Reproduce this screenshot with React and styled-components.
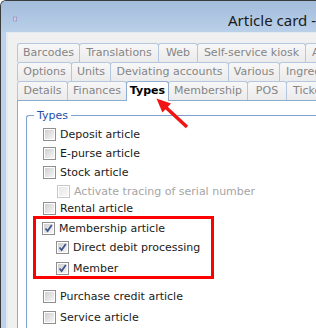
import React from 'react';
import styled, { createGlobalStyle } from 'styled-components';

const GlobalStyle = createGlobalStyle`
  html, body {
    margin: 0;
    padding: 0;
    background: #ffffff;
  }
  body {
    font-family: "DejaVu Sans", Verdana, sans-serif;
    font-size: 11px;
  }
`;

const Window = styled.div`
  position: relative;
  width: 316px;
  height: 328px;
  overflow: hidden;
  box-sizing: border-box;
  display: flex;
  flex-direction: column;
  background: #bdd2ea;
  border-left: 1px solid #3b3b3b;
  border-top: 1px solid #3b3b3b;
  border-top-left-radius: 6px;
`;

const TitleBar = styled.div`
  height: 31px;
  flex-shrink: 0;
  display: flex;
  align-items: flex-start;
  padding: 11px 0 0 12px;
  box-sizing: border-box;
  background: linear-gradient(#a2bcdb, #bad0e9);
`;

const Title = styled.div`
  margin-left: 211px;
  margin-top: -2px;
  font-family: "Noto Sans", "Open Sans", sans-serif;
  font-size: 15px;
  color: #1a1a1a;
  white-space: nowrap;
`;

const Body = styled.div`
  flex: 1;
  display: flex;
  padding-left: 5px;
  min-height: 0;
`;

const Client = styled.div`
  flex: 1;
  display: flex;
  flex-direction: column;
  background: #f0f0f0;
  border-left: 2px solid #e2eaf4;
  border-top: 1px solid #e2eaf4;
  padding: 10px 0 0 9px;
  min-width: 0;
`;

const TabRow = styled.div`
  display: flex;
  height: 19px;
  flex-shrink: 0;
`;

const Tab = styled.div`
  position: relative;
  flex-shrink: 0;
  box-sizing: border-box;
  width: ${p => p.$w}px;
  height: ${p => (p.$active ? 20 : 19)}px;
  margin-left: ${p => (p.$first ? 0 : -1)}px;
  margin-bottom: ${p => (p.$active ? -1 : 0)}px;
  z-index: ${p => (p.$active ? 2 : 1)};
  border: 1px solid ${p => (p.$active ? '#8eabd0' : '#b4c7de')};
  border-bottom: none;
  border-radius: 3px 3px 0 0;
  background: ${p => (p.$active ? '#ffffff' : 'linear-gradient(#f7f7f7, #ebebeb)')};
  color: ${p => (p.$active ? '#000000' : '#858585')};
  font-weight: ${p => (p.$active ? 'bold' : 'normal')};
  line-height: 17px;
  text-align: ${p => (p.$cut ? 'left' : 'center')};
  padding-left: ${p => (p.$cut ? 6 : 0)}px;
  white-space: nowrap;
  overflow: hidden;
`;

const Panel = styled.div`
  flex: 1;
  background: #ffffff;
  border-top: 1px solid #8eabd0;
  border-left: 1px solid #8eabd0;
  padding: 14px 0 0 8px;
`;

const GroupBox = styled.div`
  position: relative;
  height: 300px;
  border: 1px solid #7f9fd0;
  border-right: none;
  border-radius: 3px 0 0 0;
  padding: 9px 0 0 16px;
`;

const Legend = styled.span`
  position: absolute;
  top: -7px;
  left: 7px;
  padding: 0 3px;
  background: #ffffff;
  color: #1f4fb0;
  line-height: 13px;
`;

const Row = styled.div`
  display: flex;
  align-items: center;
  gap: 4px;
  height: ${p => p.$h || 19}px;
  margin-top: ${p => p.$mt || 0}px;
  padding-left: ${p => (p.$indent ? 14 : 0)}px;
  color: ${p => (p.$disabled ? '#a5a5a5' : '#1a1a1a')};
  white-space: nowrap;
`;

const Highlight = styled.div`
  width: 181px;
  box-sizing: border-box;
  margin-left: -10px;
  border: 3px solid #ff0000;
  padding-left: 6px;
`;

const Box = styled.span`
  position: relative;
  flex-shrink: 0;
  width: 13px;
  height: 13px;
  box-sizing: border-box;
  border: 1px solid ${p => (p.$disabled ? '#c8c8c8' : '#8f8f8f')};
  background: #ffffff;

  &::before {
    content: '';
    position: absolute;
    inset: 1px;
    background: ${p =>
      p.$disabled
        ? 'linear-gradient(135deg, #e8e8e8, #f7f7f7)'
        : 'linear-gradient(135deg, #cfcfcf, #f6f6f6)'};
  }

  svg {
    position: absolute;
    left: 1px;
    top: 1px;
  }
`;

const Overlay = styled.svg`
  position: absolute;
  left: -1px;
  top: -1px;
  pointer-events: none;
  z-index: 5;
`;

function WinIcon() {
  return (
    <svg width="13" height="14" viewBox="0 0 13 14">
      <rect x="0.5" y="0.5" width="12" height="13" fill="#b9b3dd" stroke="#7670ae" />
      <path d="M3 3.5h7M3 5.5h5M3 7.5h7M3 9.5h4M3 11.5h6" stroke="#f4f2fb" strokeWidth="1" />
    </svg>
  );
}

function Checkbox({ checked, disabled }) {
  return (
    <Box $disabled={disabled}>
      {checked && (
        <svg width="9" height="9" viewBox="0 0 9 9">
          <path d="M1.5 4.5 L3.6 7 L7.8 1" fill="none" stroke="#42568e" strokeWidth="1.8" />
        </svg>
      )}
    </Box>
  );
}

function Option({ label, checked, disabled, indent, h, mt }) {
  return (
    <Row $indent={indent} $disabled={disabled} $h={h} $mt={mt}>
      <Checkbox checked={checked} disabled={disabled} />
      <span>{label}</span>
    </Row>
  );
}

const tabRows = [
  [
    ['Barcodes', 63], ['Translations', 80], ['Web', 40], ['Self-service kiosk', 109], ['Additional', 120, 'cut'],
  ],
  [
    ['Options', 55], ['Units', 40], ['Deviating accounts', 119], ['Various', 52], ['Ingredients', 100, 'cut'],
  ],
  [
    ['Details', 51], ['Finances', 60], ['Types', 43, 'active'], ['Membership', 80], ['POS', 40], ['Tickets', 80, 'cut'],
  ],
];

export default function App() {
  return (
    <>
      <GlobalStyle />
      <Window>
        <TitleBar>
          <WinIcon />
          <Title>Article card -</Title>
        </TitleBar>
        <Body>
          <Client>
            {tabRows.map((row, i) => (
              <TabRow key={i}>
                {row.map(([name, w, flag], j) => (
                  <Tab
                    key={name}
                    $w={w}
                    $first={j === 0}
                    $active={flag === 'active'}
                    $cut={flag === 'cut'}
                  >
                    {name}
                  </Tab>
                ))}
              </TabRow>
            ))}
            <Panel>
              <GroupBox>
                <Legend>Types</Legend>
                <Option label="Deposit article" />
                <Option label="E-purse article" />
                <Option label="Stock article" />
                <Option label="Activate tracing of serial number" indent disabled />
                <Option label="Rental article" h={15} />
                <Highlight>
                  <Option label="Membership article" checked />
                  <Option label="Direct debit processing" checked indent />
                  <Option label="Member" checked indent h={16} mt={3} />
                </Highlight>
                <Option label="Purchase credit article" mt={8} />
                <Option label="Service article" mt={2} />
              </GroupBox>
            </Panel>
          </Client>
        </Body>
        <Overlay width="316" height="328" viewBox="0 0 316 328">
          <line x1="187" y1="127" x2="166" y2="107.5" stroke="#f01414" strokeWidth="3.5" />
          <polygon points="156.5,98.5 171,103.4 162.4,112.6" fill="#f01414" />
        </Overlay>
      </Window>
    </>
  );
}
